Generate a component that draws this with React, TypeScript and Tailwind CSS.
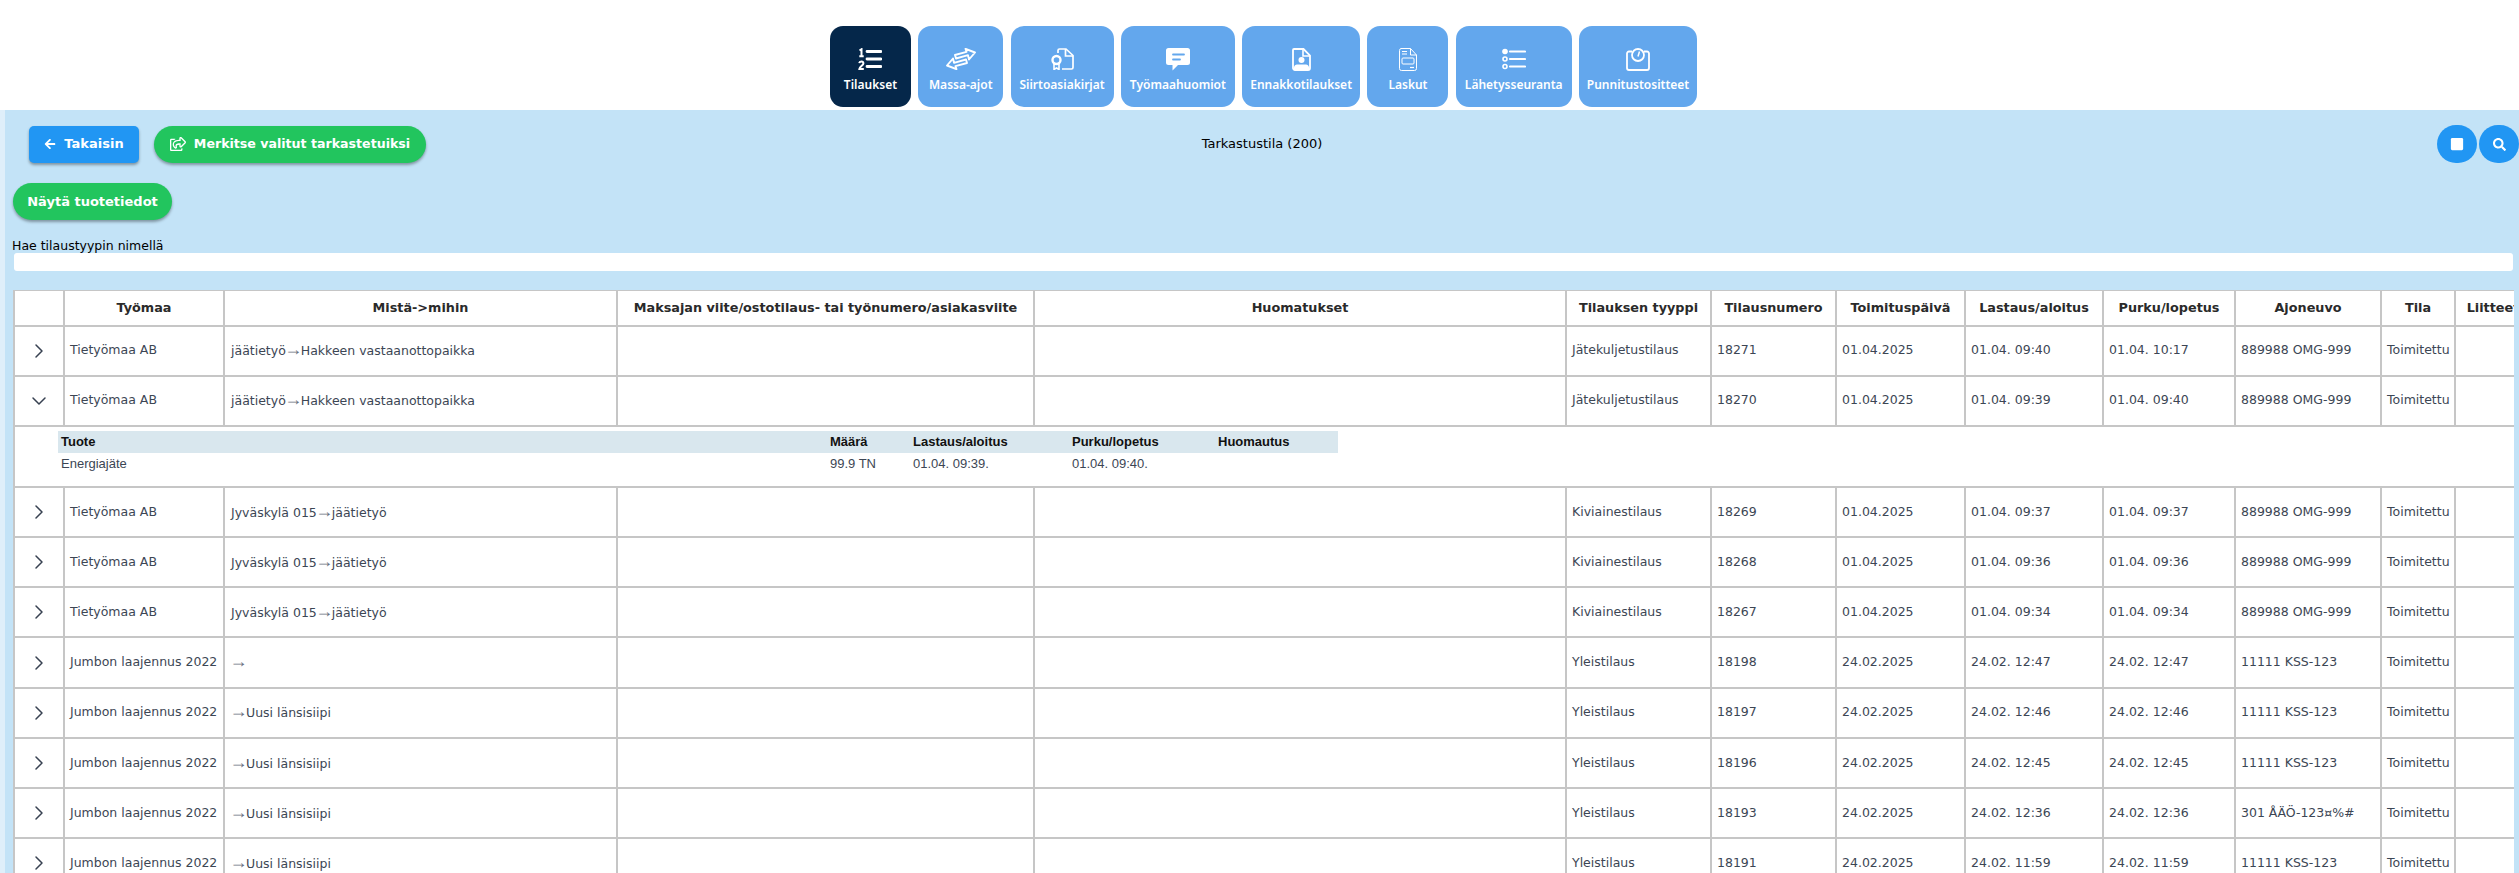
import { ChevronDown, ChevronRight } from 'lucide-react';
import { FaArrowLeft, FaRegShareSquare, FaSearch, FaStop } from 'react-icons/fa';

const IconOrders = () => (
  <svg viewBox="0 0 24 22" className="w-6 h-[22px]" fill="none" stroke="white">
    <path d="M9 3.500h14M9 11h14M9 18.500h14" strokeWidth="2.800" strokeLinecap="round" />
    <path d="M1.500 2.500 3.500 1.200V8M1.300 8.200h4.400" strokeWidth="2" />
    <path d="M1.200 15.200c.4-2.400 4.200-2.200 4.200.2 0 1.800-3.600 3-4 5.600h4.400" strokeWidth="2" />
  </svg>
);

const IconExchange = () => (
  <svg viewBox="0 0 30 22" className="w-[30px] h-[22px]" fill="none" stroke="white" strokeWidth="1.900" strokeLinejoin="round">
    <path d="M29 4.500 19.500 0.800 20.500 3.800 9 7 10 10.500 22 7.200 23 11.500Z" />
    <path d="M1 17.500 10.500 21.200 9.500 18.200 21 15 20 11.500 8 14.800 7 10.500Z" />
  </svg>
);

const IconCertificate = () => (
  <svg viewBox="0 0 24 22" className="w-6 h-[22px]" fill="none" stroke="white" strokeWidth="1.700">
    <path d="M8 5V2.500A1.500 1.500 0 0 1 9.500 1H16l7 6.500v12A1.500 1.500 0 0 1 21.500 21H12" />
    <path d="M15.500 1v7H23" />
    <circle cx="6.500" cy="12" r="4" strokeWidth="2.400" />
    <path d="M4 16v5.500l2.500-1.500L9 21.500V16" strokeWidth="1.600" />
  </svg>
);

const IconComment = () => (
  <svg viewBox="0 0 24 23" className="w-6 h-[23px]">
    <path d="M2.500 0h19A2.500 2.500 0 0 1 24 2.500v12a2.500 2.500 0 0 1-2.500 2.500H12l-5.500 5.500V17h-4A2.500 2.500 0 0 1 0 14.500v-12A2.500 2.500 0 0 1 2.500 0z" fill="white" />
    <path d="M7 6.500h11M7 11.500h7" stroke="#63a7ed" strokeWidth="1.800" strokeLinecap="round" />
  </svg>
);

const IconFileUser = () => (
  <svg viewBox="0 0 19 23" className="w-[19px] h-[23px]">
    <path d="M2 1h9.500L18 7.500V20a2 2 0 0 1-2 2H3a2 2 0 0 1-2-2V2a1 1 0 0 1 1-1z" fill="none" stroke="white" strokeWidth="1.800" />
    <path d="M11 1v7h7" fill="none" stroke="white" strokeWidth="1.600" />
    <circle cx="9.500" cy="12" r="3" fill="white" />
    <path d="M2 22v-2.500C2 17 4.500 16.500 6 16.500h7c1.500 0 4 .5 4 3V22z" fill="white" />
  </svg>
);

const IconInvoice = () => (
  <svg viewBox="0 0 18 23" className="w-[18px] h-[23px]" fill="none" stroke="white" strokeWidth="1">
    <path d="M2 .5h9.500L17.500 7v13.500a2 2 0 0 1-2 2h-13a2 2 0 0 1-2-2v-18a2 2 0 0 1 1.500-2z" />
    <path d="M11.500.5V7h6" />
    <path d="M3 3.500h5M3 6h5" strokeWidth="1.200" />
    <rect x="3" y="10" width="12" height="6" rx="1" />
    <path d="M11 19.500h4" strokeWidth="1.200" />
  </svg>
);

const IconTracking = () => (
  <svg viewBox="0 0 24 22" className="w-6 h-[22px]" fill="none" stroke="white">
    <circle cx="3" cy="3.500" r="2.800" fill="white" stroke="none" />
    <circle cx="3" cy="11" r="2" strokeWidth="1.600" />
    <circle cx="3" cy="18.500" r="2" strokeWidth="1.600" />
    <path d="M8 3.500h15M8 11h15M8 18.500h15" strokeWidth="2.200" strokeLinecap="round" />
  </svg>
);

const IconScale = () => (
  <svg viewBox="0 0 24 23" className="w-6 h-[23px]" fill="none" stroke="white" strokeWidth="1.800">
    <path d="M6 3.500H3A2 2 0 0 0 1 5.500V20a2 2 0 0 0 2 2h18a2 2 0 0 0 2-2V5.500a2 2 0 0 0-2-2h-3" />
    <circle cx="12" cy="7" r="6" />
    <path d="M12 8.500 13.500 3.500" strokeWidth="1.500" />
  </svg>
);

const tabs = [
  { label: 'Tilaukset', width: 'w-[81px]', icon: <IconOrders />, active: true },
  { label: 'Massa-ajot', width: 'w-[85px]', icon: <IconExchange /> },
  { label: 'Siirtoasiakirjat', width: 'w-[103px]', icon: <IconCertificate /> },
  { label: 'Työmaahuomiot', width: 'w-[114px]', icon: <IconComment /> },
  { label: 'Ennakkotilaukset', width: 'w-[118px]', icon: <IconFileUser /> },
  { label: 'Laskut', width: 'w-[81px]', icon: <IconInvoice /> },
  { label: 'Lähetysseuranta', width: 'w-[116px]', icon: <IconTracking /> },
  { label: 'Punnitustositteet', width: 'w-[118px]', icon: <IconScale /> },
];

const columns = [
  { label: '', width: 'w-[50px]' },
  { label: 'Työmaa', width: 'w-[160px]' },
  { label: 'Mistä->mihin', width: 'w-[393px]' },
  { label: 'Maksajan viite/ostotilaus- tai työnumero/asiakasviite', width: 'w-[417px]' },
  { label: 'Huomatukset', width: 'w-[532px]' },
  { label: 'Tilauksen tyyppi', width: 'w-[145px]' },
  { label: 'Tilausnumero', width: 'w-[125px]' },
  { label: 'Toimituspäivä', width: 'w-[129px]' },
  { label: 'Lastaus/aloitus', width: 'w-[138px]' },
  { label: 'Purku/lopetus', width: 'w-[132px]' },
  { label: 'Ajoneuvo', width: 'w-[146px]' },
  { label: 'Tila', width: 'w-[74px]' },
  { label: 'Liitteet', width: 'w-[76px]' },
];

interface Order {
  site: string;
  from: string;
  to: string;
  type: string;
  num: string;
  date: string;
  start: string;
  end: string;
  vehicle: string;
  open?: boolean;
}

const orders: Order[] = [
  { site: 'Tietyömaa AB', from: 'jäätietyö', to: 'Hakkeen vastaanottopaikka', type: 'Jätekuljetustilaus', num: '18271', date: '01.04.2025', start: '01.04. 09:40', end: '01.04. 10:17', vehicle: '889988 OMG-999' },
  { site: 'Tietyömaa AB', from: 'jäätietyö', to: 'Hakkeen vastaanottopaikka', type: 'Jätekuljetustilaus', num: '18270', date: '01.04.2025', start: '01.04. 09:39', end: '01.04. 09:40', vehicle: '889988 OMG-999', open: true },
  { site: 'Tietyömaa AB', from: 'Jyväskylä 015', to: 'jäätietyö', type: 'Kiviainestilaus', num: '18269', date: '01.04.2025', start: '01.04. 09:37', end: '01.04. 09:37', vehicle: '889988 OMG-999' },
  { site: 'Tietyömaa AB', from: 'Jyväskylä 015', to: 'jäätietyö', type: 'Kiviainestilaus', num: '18268', date: '01.04.2025', start: '01.04. 09:36', end: '01.04. 09:36', vehicle: '889988 OMG-999' },
  { site: 'Tietyömaa AB', from: 'Jyväskylä 015', to: 'jäätietyö', type: 'Kiviainestilaus', num: '18267', date: '01.04.2025', start: '01.04. 09:34', end: '01.04. 09:34', vehicle: '889988 OMG-999' },
  { site: 'Jumbon laajennus 2022', from: '', to: '', type: 'Yleistilaus', num: '18198', date: '24.02.2025', start: '24.02. 12:47', end: '24.02. 12:47', vehicle: '11111 KSS-123' },
  { site: 'Jumbon laajennus 2022', from: '', to: 'Uusi länsisiipi', type: 'Yleistilaus', num: '18197', date: '24.02.2025', start: '24.02. 12:46', end: '24.02. 12:46', vehicle: '11111 KSS-123' },
  { site: 'Jumbon laajennus 2022', from: '', to: 'Uusi länsisiipi', type: 'Yleistilaus', num: '18196', date: '24.02.2025', start: '24.02. 12:45', end: '24.02. 12:45', vehicle: '11111 KSS-123' },
  { site: 'Jumbon laajennus 2022', from: '', to: 'Uusi länsisiipi', type: 'Yleistilaus', num: '18193', date: '24.02.2025', start: '24.02. 12:36', end: '24.02. 12:36', vehicle: '301 ÅÄÖ-123¤%#' },
  { site: 'Jumbon laajennus 2022', from: '', to: 'Uusi länsisiipi', type: 'Yleistilaus', num: '18191', date: '24.02.2025', start: '24.02. 11:59', end: '24.02. 11:59', vehicle: '11111 KSS-123' },
];

const td = 'border-2 border-[#c6c6c6] px-[5px] text-[12.5px] text-[#3c4654] whitespace-nowrap overflow-hidden';

function OrderRows({ order }: { order: Order }) {
  return (
    <>
      <tr className="h-[50.2px]">
        <td className={td}>
          <div className="flex justify-center text-[#374151]">
            {order.open ? <ChevronDown size={24} strokeWidth={1.5} /> : <ChevronRight size={24} strokeWidth={1.5} />}
          </div>
        </td>
        <td className={td}>{order.site}</td>
        <td className={td}>
          <span className="pl-px">{order.from}</span>
          <span className="-mx-[1.5px] font-['Liberation_Sans',sans-serif] text-[18px] leading-none text-[#6b7280]">→</span>
          {order.to}
        </td>
        <td className={td}></td>
        <td className={td}></td>
        <td className={td}>{order.type}</td>
        <td className={td}>{order.num}</td>
        <td className={td}>{order.date}</td>
        <td className={td}>{order.start}</td>
        <td className={td}>{order.end}</td>
        <td className={td}>{order.vehicle}</td>
        <td className={td}>Toimitettu</td>
        <td className={td}></td>
      </tr>
      {order.open && (
        <tr className="h-[61px]">
          <td colSpan={13} className="border-2 border-[#c6c6c6] align-top pt-[4px] pl-[43px]">
            <div className="w-[1280px] font-['Liberation_Sans',sans-serif] text-[13px]">
              <div className="flex h-[22px] items-center bg-[#d9e7ee] font-bold text-[#111111]">
                <span className="w-[772px] pl-[3px]">Tuote</span>
                <span className="w-[83px]">Määrä</span>
                <span className="w-[159px]">Lastaus/aloitus</span>
                <span className="w-[146px]">Purku/lopetus</span>
                <span>Huomautus</span>
              </div>
              <div className="flex h-[22px] items-center text-[#3c4654]">
                <span className="w-[772px] pl-[3px]">Energiajäte</span>
                <span className="w-[83px]">99.9 TN</span>
                <span className="w-[159px]">01.04. 09:39.</span>
                <span className="w-[146px]">01.04. 09:40.</span>
              </div>
            </div>
          </td>
        </tr>
      )}
    </>
  );
}

export default function App() {
  return (
    <div className="h-[873px] w-[2519px] overflow-hidden bg-white font-['DejaVu_Sans',sans-serif]">
      <nav className="flex h-[110px] justify-center gap-[7.3px] pt-[26px] pl-[8px]">
        {tabs.map((tab) => (
          <button
            key={tab.label}
            className={`flex h-[81px] flex-col items-center rounded-[13px] pt-[21px] font-['Noto_Sans',sans-serif] text-[12px] font-semibold text-white ${tab.width} ${tab.active ? 'bg-[#05274a]' : 'bg-[#63a7ed]'}`}
          >
            <span className="flex h-[24px] items-center justify-center">{tab.icon}</span>
            <span className="mt-[5px] whitespace-nowrap">{tab.label}</span>
          </button>
        ))}
      </nav>

      <main className="h-[763px] border-l-[5px] border-[#dfeffa] bg-[#c3e3f7] pt-[15px]">
        <div className="grid grid-cols-[1fr_auto_1fr] items-center text-[13px]">
          <div className="flex gap-[15px] pl-[24px]">
            <button className="flex h-[37px] w-[110px] items-center justify-center gap-[8px] rounded-[5px] bg-[#2196f3] font-bold text-white shadow-[0_2px_3px_rgba(0,0,0,0.35)]">
              <FaArrowLeft size={12} />
              Takaisin
            </button>
            <button className="flex h-[37px] w-[272px] items-center justify-center gap-[8px] rounded-full bg-[#22c55e] text-[12.6px] font-bold text-white shadow-[0_2px_3px_rgba(0,0,0,0.35)]">
              <FaRegShareSquare size={16} />
              Merkitse valitut tarkastetuiksi
            </button>
          </div>
          <div className="text-black">Tarkastustila (200)</div>
          <div className="flex justify-end gap-[2px]">
            <button className="flex h-[38px] w-[40px] items-center justify-center rounded-full bg-[#2196f3] text-white">
              <FaStop size={14} />
            </button>
            <button className="flex h-[38px] w-[40px] items-center justify-center rounded-full bg-[#2196f3] text-white">
              <FaSearch size={13} />
            </button>
          </div>
        </div>

        <button className="ml-[8px] mt-[20px] flex h-[37px] w-[159px] items-center justify-center rounded-full bg-[#22c55e] text-[13px] font-bold text-white shadow-[0_2px_3px_rgba(0,0,0,0.35)]">
          Näytä tuotetiedot
        </button>

        <label className="ml-[7px] mt-[18px] block h-[15px] text-[12.5px] leading-[15px] text-black">Hae tilaustyypin nimellä</label>
        <input className="ml-[9px] block h-[18px] w-[2499px] rounded-[3px] bg-white" />

        <div className="ml-[8px] mr-[5px] mt-[19px] overflow-hidden bg-white">
          <table className="w-[2517px] table-fixed border-collapse">
            <colgroup>
              {columns.map((col) => (
                <col key={col.width + col.label} className={col.width} />
              ))}
            </colgroup>
            <thead>
              <tr className="h-[35px]">
                {columns.map((col) => (
                  <th
                    key={col.label}
                    className="border-2 border-t border-[#c6c6c6] text-center text-[12.8px] font-bold whitespace-nowrap text-[#2a2a2a]"
                  >
                    {col.label}
                  </th>
                ))}
              </tr>
            </thead>
            <tbody>
              {orders.map((order) => (
                <OrderRows key={order.num} order={order} />
              ))}
            </tbody>
          </table>
        </div>
      </main>
    </div>
  );
}
